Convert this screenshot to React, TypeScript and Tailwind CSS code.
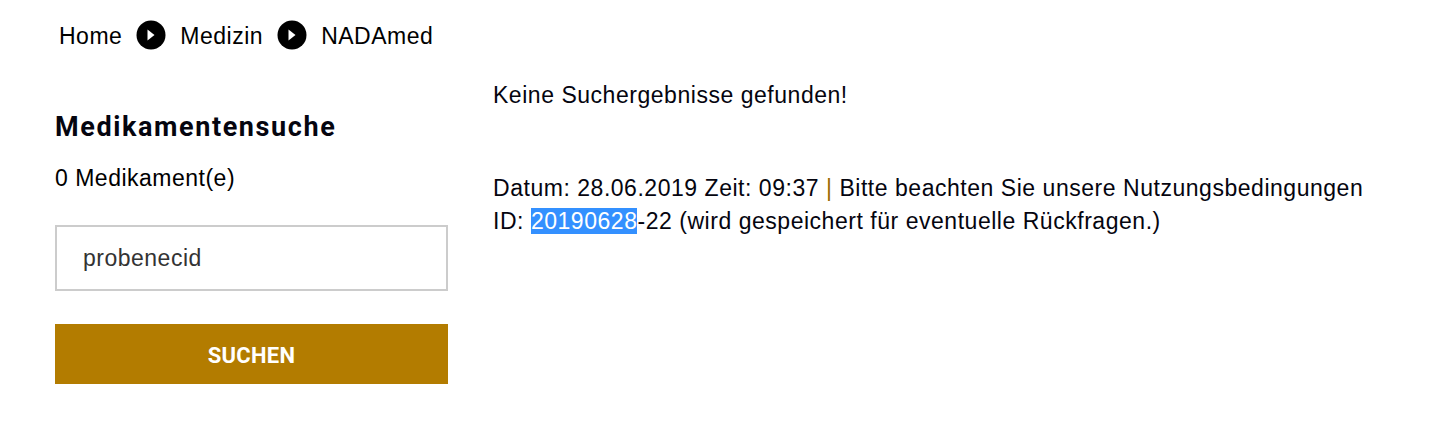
const sans = "font-['Liberation_Sans',Arial,sans-serif]";

function Chevron() {
  return (
    <svg width="30" height="30" viewBox="0 0 30 30" className="block shrink-0">
      <circle cx="15" cy="15" r="14.5" fill="#000" />
      <path d="M11.5 9.5 L18.5 15 L11.5 20.5 Z" fill="#fff" />
    </svg>
  );
}

export default function App() {
  return (
    <div className={`${sans} h-[444px] w-[1446px] bg-white text-black overflow-hidden tracking-[0.5px]`}>
      <nav className="flex items-center pl-[59px] h-[72px] text-[23px] leading-[30px]">
        <span>Home</span>
        <span className="mx-[14px] mb-[2px]"><Chevron /></span>
        <span>Medizin</span>
        <span className="mx-[14px] mb-[2px]"><Chevron /></span>
        <span>NADAmed</span>
      </nav>

      <div className="flex pl-[55px]">
        <aside className="w-[393px] shrink-0">
          <h2 className="mt-[38px] font-['Roboto',sans-serif] text-[27px] leading-[34px] font-bold tracking-[1.6px] text-[#05050f]">
            Medikamentensuche
          </h2>
          <p className="mt-[19px] text-[23px] leading-[30px]">0 Medikament(e)</p>
          <input
            readOnly
            value="probenecid"
            className="mt-[32px] block w-full h-[66px] border-2 border-[#cccccc] px-[26px] text-[23px] text-[#333333] outline-none"
          />
          <button className="mt-[33px] block w-full h-[60px] pt-[2px] bg-[#b37c00] text-white font-['Roboto',sans-serif] text-[22px] tracking-[0.3px] font-bold">
            SUCHEN
          </button>
        </aside>

        <main className="ml-[45px] text-[23px] leading-[33px] tracking-[0.53px] text-[#05050f]">
          <p className="mt-[7px]">Keine Suchergebnisse gefunden!</p>
          <p className="mt-[60px]">
            Datum: 28.06.2019 Zeit: 09:37 <span className="text-[#9b6a00]">|</span> Bitte beachten Sie unsere Nutzungsbedingungen
            <br />
            ID: <span className="bg-[#3390ff] text-white">20190628</span>-22 (wird gespeichert für eventuelle Rückfragen.)
          </p>
        </main>
      </div>
    </div>
  );
}
